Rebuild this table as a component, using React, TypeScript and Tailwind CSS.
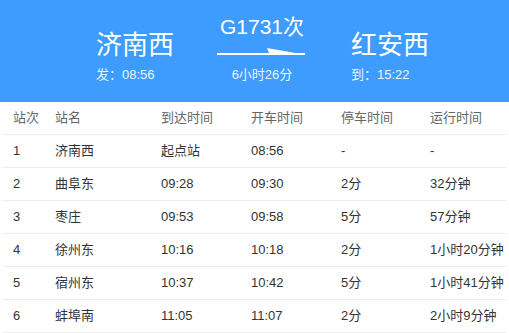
const rows = [
  ["1", "济南西", "起点站", "08:56", "-", "-"],
  ["2", "曲阜东", "09:28", "09:30", "2分", "32分钟"],
  ["3", "枣庄", "09:53", "09:58", "5分", "57分钟"],
  ["4", "徐州东", "10:16", "10:18", "2分", "1小时20分钟"],
  ["5", "宿州东", "10:37", "10:42", "5分", "1小时41分钟"],
  ["6", "蚌埠南", "11:05", "11:07", "2分", "2小时9分钟"],
];

const head = ["站次", "站名", "到达时间", "开车时间", "停车时间", "运行时间"];

function Cells({ cells, className }: { cells: string[]; className: string }) {
  return (
    <div className={`grid grid-cols-[42px_106px_90px_90px_89px_1fr] h-[33px] items-center pl-[10px] border-b border-[#ececec] ${className}`}>
      {cells.map((c, i) => (
        <span key={i} className="whitespace-nowrap">{c}</span>
      ))}
    </div>
  );
}

export default function App() {
  return (
    <main className="w-[509px] h-[333px] bg-white overflow-hidden" style={{ fontFamily: '"Liberation Sans", "Noto Sans CJK SC", sans-serif' }}>
      {/* HERO */}
      <section className="h-[102px] bg-[#3d9cfe] text-white flex pl-[96px] pt-[30px]">
        <div className="w-[121px]">
          <div className="text-[26px] leading-[30px]">济南西</div>
          <div className="text-[13px] leading-[16px] mt-[7px] text-[#eaf4ff]">发：08:56</div>
        </div>
        <div className="w-[134px]">
          <div className="w-[90px] flex flex-col items-center -mt-[15px]">
            <div className="text-[21px] leading-[24px]">G1731次</div>
            <svg width="90" height="10" viewBox="0 0 90 10" className="mt-[8px]">
              <rect x="0" y="6" width="88" height="2" fill="#fff" />
              <polygon points="50,1 90,8 52,6" fill="#fff" />
            </svg>
            <div className="text-[13px] leading-[16px] mt-[10px] text-[#eaf4ff]">6小时26分</div>
          </div>
        </div>
        <div>
          <div className="text-[26px] leading-[30px]">红安西</div>
          <div className="text-[13px] leading-[16px] mt-[7px] text-[#eaf4ff]">到：15:22</div>
        </div>
      </section>

      {/* TABLE */}
      <section className="mx-[3px] text-[13px]">
        <Cells cells={head} className="text-[#666] h-[32px]" />
        {rows.map((r, i) => (
          <Cells key={i} cells={r} className="text-[#333]" />
        ))}
      </section>
    </main>
  );
}
